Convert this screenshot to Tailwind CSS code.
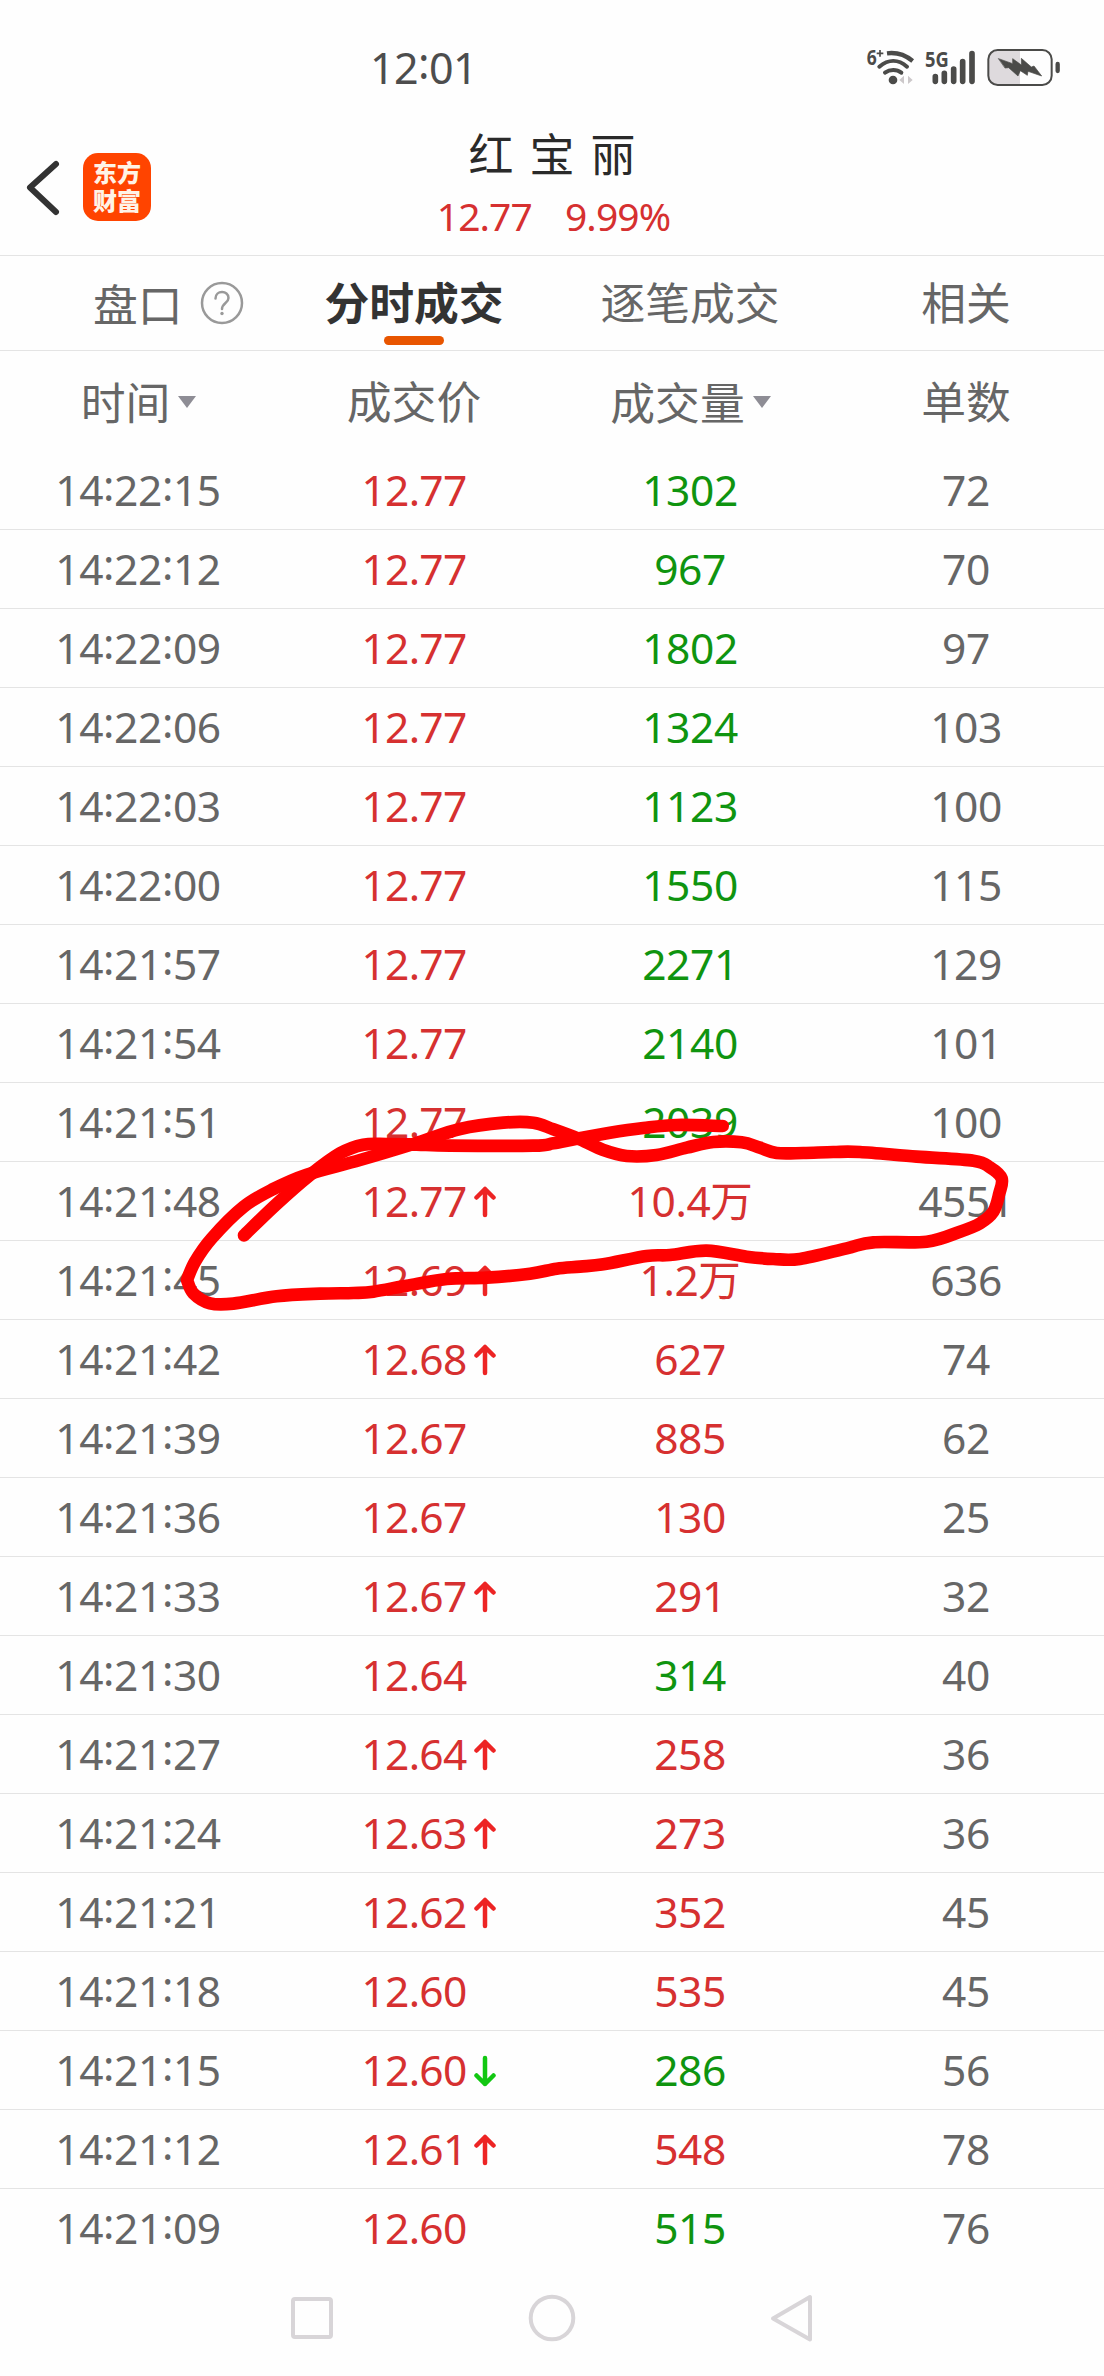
<!DOCTYPE html>
<html lang="zh-CN">
<head>
<meta charset="utf-8">
<title>红宝丽 分时成交</title>
<script src="https://cdn.jsdelivr.net/npm/@tailwindcss/browser@4"></script>
</head>
<body class="bg-[#fefefe]">
<div class="relative flex flex-col w-[1104px] h-[2376px] overflow-hidden bg-[#fefefe] font-['Noto_Sans','Noto_Sans_CJK_SC',sans-serif] text-[#666]">

  <!-- status bar -->
  <div class="flex justify-between h-[110px] pt-[30px] pl-[370px]">
    <div class="h-[76px] leading-[76px] text-[43px] tracking-[-0.6px] text-[#4d4d4d]">12<span class="inline-block -translate-y-[5px]">:</span>01</div>
    <svg class="w-[264px] h-[80px]" viewBox="0 0 792 240" fill="none" stroke="#4b4b49" stroke-linecap="round">
      <g fill="#4b4b49" stroke="none" font-family="Noto Sans, sans-serif" font-weight="700">
        <text x="80" y="106" font-size="64" textLength="30" lengthAdjust="spacingAndGlyphs">6</text>
        <text x="255" y="111" font-size="66" textLength="71" lengthAdjust="spacingAndGlyphs">5G</text>
      </g>
      <path d="M110 70H130M120 60V80" stroke-width="5" stroke-linecap="butt"/>
      <path d="M141 70C172 66 196 75 218 93" stroke-width="13" stroke-linecap="butt"/>
      <path d="M118 110C145 87 175 87 201 110M135 128C150 117 170 117 184 128" stroke-width="12"/>
      <circle cx="159" cy="150" r="13" fill="#4b4b49" stroke="none"/>
      <path d="M178 150L192 137V162ZM218 150L204 137V162Z" fill="#ccc8ca" stroke="none"/>
      <path d="M286 140V154M313 130V154M341 117V154M368 95V154M396 71V154" stroke-width="17"/>
      <path d="M470 60H540V165H470Q445 165 445 140V85Q445 60 470 60Z" fill="#dedadd" stroke="none"/>
      <rect x="445" y="60" width="190" height="105" rx="28" stroke-width="6"/>
      <path d="M476 86L518 101V86L544 105V85L574 111L582 108L605 138L564 124L562 136L541 122L534 138L506 113L496 114Z" fill="#4b4b49" stroke="#4b4b49" stroke-width="2" stroke-linejoin="round"/>
      <path d="M653 102V123" stroke-width="13"/>
    </svg>
  </div>

  <!-- stock title -->
  <header class="grid grid-cols-[276px_1fr_276px] h-[146px] border-b border-[#e4e4e4]">
    <div class="flex items-start pl-[24px] pt-[43px]">
      <svg class="w-[40px] h-[68px] mr-[19px]" viewBox="0 0 40 68" fill="none" stroke="#333" stroke-width="6" stroke-linecap="round" stroke-linejoin="round"><path d="M32 11L6 34.500L32 59"/></svg>
      <div class="flex flex-col items-center justify-center w-[68px] h-[68px] pb-[3px] rounded-[15px] bg-[#ff4400] text-[#fff3e6] text-[24px] leading-[28px] font-black font-['Noto_Sans_CJK_SC',sans-serif]"><span>东方</span><span>财富</span></div>
    </div>
    <div class="flex flex-col items-center">
      <div class="h-[86px] leading-[86px] text-[45px] tracking-[16px] pl-[16px] text-[#2a2a2a] font-['Noto_Sans_CJK_SC',sans-serif]">红宝丽</div>
      <div class="flex gap-[33px] -mt-[5px] pl-[3px] leading-[50px] text-[39px] tracking-[-0.9px] text-[#d63030]"><span>12.77</span><span>9.99%</span></div>
    </div>
  </header>

  <!-- tabs -->
  <nav class="grid grid-cols-4 h-[95px] border-b border-[#e4e4e4] leading-[90px] text-[44.8px] text-center font-['Noto_Sans_CJK_SC',sans-serif]">
    <div class="flex items-center h-[93px] pl-[93px]">盘口
      <svg class="w-[44px] h-[44px] ml-[17px]" viewBox="0 0 44 44" fill="none" stroke="#999" stroke-width="2.500"><circle cx="22" cy="22" r="20"/><path d="M15.500 17.500C15.500 9 28.500 9 28.500 17C28.500 22 22 22 22 28" stroke-linecap="round"/><circle cx="22" cy="32.500" r="1.700" fill="#999" stroke="none"/></svg>
    </div>
    <div class="relative font-bold text-[#333]">分时成交<span class="absolute left-[108px] top-[80px] w-[60px] h-[9px] rounded-full bg-[#e85500]"></span></div>
    <div>逐笔成交</div>
    <div>相关</div>
  </nav>

  <!-- column heads -->
  <div class="grid grid-cols-4 h-[100px] leading-[97px] text-[44.8px] font-['Noto_Sans_CJK_SC',sans-serif]">
    <div class="flex items-center justify-center h-[98px] gap-[8px] pl-[1px]">时间<svg class="w-[18px] h-[12px] mt-[4px]" viewBox="0 0 18 12"><path d="M0 0H18L9 12Z" fill="#8e8d95"/></svg></div>
    <div class="text-center">成交价</div>
    <div class="flex items-center justify-center h-[98px] gap-[8px] pl-[1px]">成交量<svg class="w-[18px] h-[12px] mt-[4px]" viewBox="0 0 18 12"><path d="M0 0H18L9 12Z" fill="#8e8d95"/></svg></div>
    <div class="text-center">单数</div>
  </div>

  <div id="rows" class="text-[42.5px]"></div>

  <!-- system navigation -->
  <div class="flex justify-between h-[108px] pt-[25px] pl-[289px] pr-[289px]">
    <svg class="w-[46px] h-[50px]" viewBox="0 0 46 50" fill="none" stroke="#d8d5d8" stroke-width="4"><rect x="4" y="6" width="38" height="38" rx="2"/></svg>
    <svg class="w-[50px] h-[50px]" viewBox="0 0 50 50" fill="none" stroke="#d8d5d8" stroke-width="4"><circle cx="25" cy="25" r="21.300"/></svg>
    <svg class="w-[46px] h-[50px]" viewBox="0 0 46 50" fill="none" stroke="#d8d5d8" stroke-width="4" stroke-linejoin="round"><path d="M4 25.500L41 4V46.500Z"/></svg>
  </div>

  <!-- hand-drawn marker -->
  <svg class="absolute left-[160px] top-[1080px] w-[880px] h-[250px]" viewBox="0 0 2640 750" fill="none" stroke="#ff0000" stroke-width="38" stroke-linecap="round" stroke-linejoin="round">
    <path id="loop"/><path id="tail"/>
  </svg>
</div>

<script>
const R = 'text-[#d63030]', G = 'text-[#0f940f]';
const data = [
  ['14:22:15','12.77','','1302',G,'72'], ['14:22:12','12.77','','967',G,'70'],
  ['14:22:09','12.77','','1802',G,'97'], ['14:22:06','12.77','','1324',G,'103'],
  ['14:22:03','12.77','','1123',G,'100'], ['14:22:00','12.77','','1550',G,'115'],
  ['14:21:57','12.77','','2271',G,'129'], ['14:21:54','12.77','','2140',G,'101'],
  ['14:21:51','12.77','','2039',G,'100'], ['14:21:48','12.77','u','10.4万',R,'4551'],
  ['14:21:45','12.69','u','1.2万',R,'636'], ['14:21:42','12.68','u','627',R,'74'],
  ['14:21:39','12.67','','885',R,'62'], ['14:21:36','12.67','','130',R,'25'],
  ['14:21:33','12.67','u','291',R,'32'], ['14:21:30','12.64','','314',G,'40'],
  ['14:21:27','12.64','u','258',R,'36'], ['14:21:24','12.63','u','273',R,'36'],
  ['14:21:21','12.62','u','352',R,'45'], ['14:21:18','12.60','','535',R,'45'],
  ['14:21:15','12.60','d','286',G,'56'], ['14:21:12','12.61','u','548',R,'78'],
  ['14:21:09','12.60','','515',G,'76']
];
const arrow = {
  '': '',
  u: '<svg class="absolute left-[198px] top-[23px] w-[22px] h-[34px]" viewBox="0 0 22 34" fill="none" stroke="#ed2424" stroke-width="4.500" stroke-linecap="round" stroke-linejoin="round"><path d="M11 30V4M2.500 12.500L11 4L19.500 12.500"/></svg>',
  d: '<svg class="absolute left-[198px] top-[23px] w-[22px] h-[34px]" viewBox="0 0 22 34" fill="none" stroke="#12c712" stroke-width="4.500" stroke-linecap="round" stroke-linejoin="round"><path d="M11 4V30M2.500 21.500L11 30L19.500 21.500"/></svg>'
};
const colon = '<span class="inline-block -translate-y-[5px]">:</span>';
document.getElementById('rows').innerHTML = data.map(([t, p, a, v, c, n], i) =>
  `<div class="grid grid-cols-4 h-[79px] leading-[78px] text-center border-b ${i === data.length - 1 ? 'border-transparent' : 'border-[#e4e4e4]'}">
    <div class="tracking-[-0.4px]">${t.replaceAll(':', colon)}</div>
    <div class="relative tracking-[-0.7px] ${R}">${p}${arrow[a]}</div>
    <div class="tracking-[-0.4px] ${c}">${v}</div>
    <div class="tracking-[-0.4px]">${n}</div>
  </div>`).join('');

// Smooth a list of points with Catmull-Rom segments.
function smooth(p) {
  let d = `M${p[0]}`;
  for (let i = 0; i < p.length - 1; i++) {
    const a = p[i - 1] || p[i], b = p[i], c = p[i + 1], e = p[i + 2] || c;
    d += `C${b[0] + (c[0] - a[0]) / 6},${b[1] + (c[1] - a[1]) / 6} ${c[0] - (e[0] - b[0]) / 6},${c[1] - (e[1] - b[1]) / 6} ${c[0]},${c[1]}`;
  }
  return d;
}
document.getElementById('tail').setAttribute('d', smooth([[252,466],[350,372],[450,285],[540,220],[610,194],[680,192],[770,194],[870,197],[1120,197],[1180,190],[1250,176],[1350,158],[1450,144],[1550,135],[1688,138]]));
document.getElementById('loop').setAttribute('d', smooth([[81,600],[105,545],[155,475],[250,381],[340,327],[440,284],[600,240],[760,192],[900,147],[1030,128],[1120,128],[1180,148],[1260,178],[1330,210],[1400,228],[1490,225],[1580,203],[1660,186],[1745,187],[1800,203],[1850,219],[1930,219],[2020,216],[2100,216],[2270,230],[2440,242],[2490,262],[2525,295],[2518,340],[2500,395],[2460,430],[2400,455],[2300,485],[2140,487],[2060,505],[1920,537],[1840,537],[1760,530],[1640,512],[1530,525],[1460,528],[1330,553],[1260,560],[1190,566],[1110,581],[980,593],[860,597],[740,617],[640,635],[580,639],[480,641],[350,649],[220,671],[150,670],[100,640],[81,600]]));
</script>
</body>
</html>
